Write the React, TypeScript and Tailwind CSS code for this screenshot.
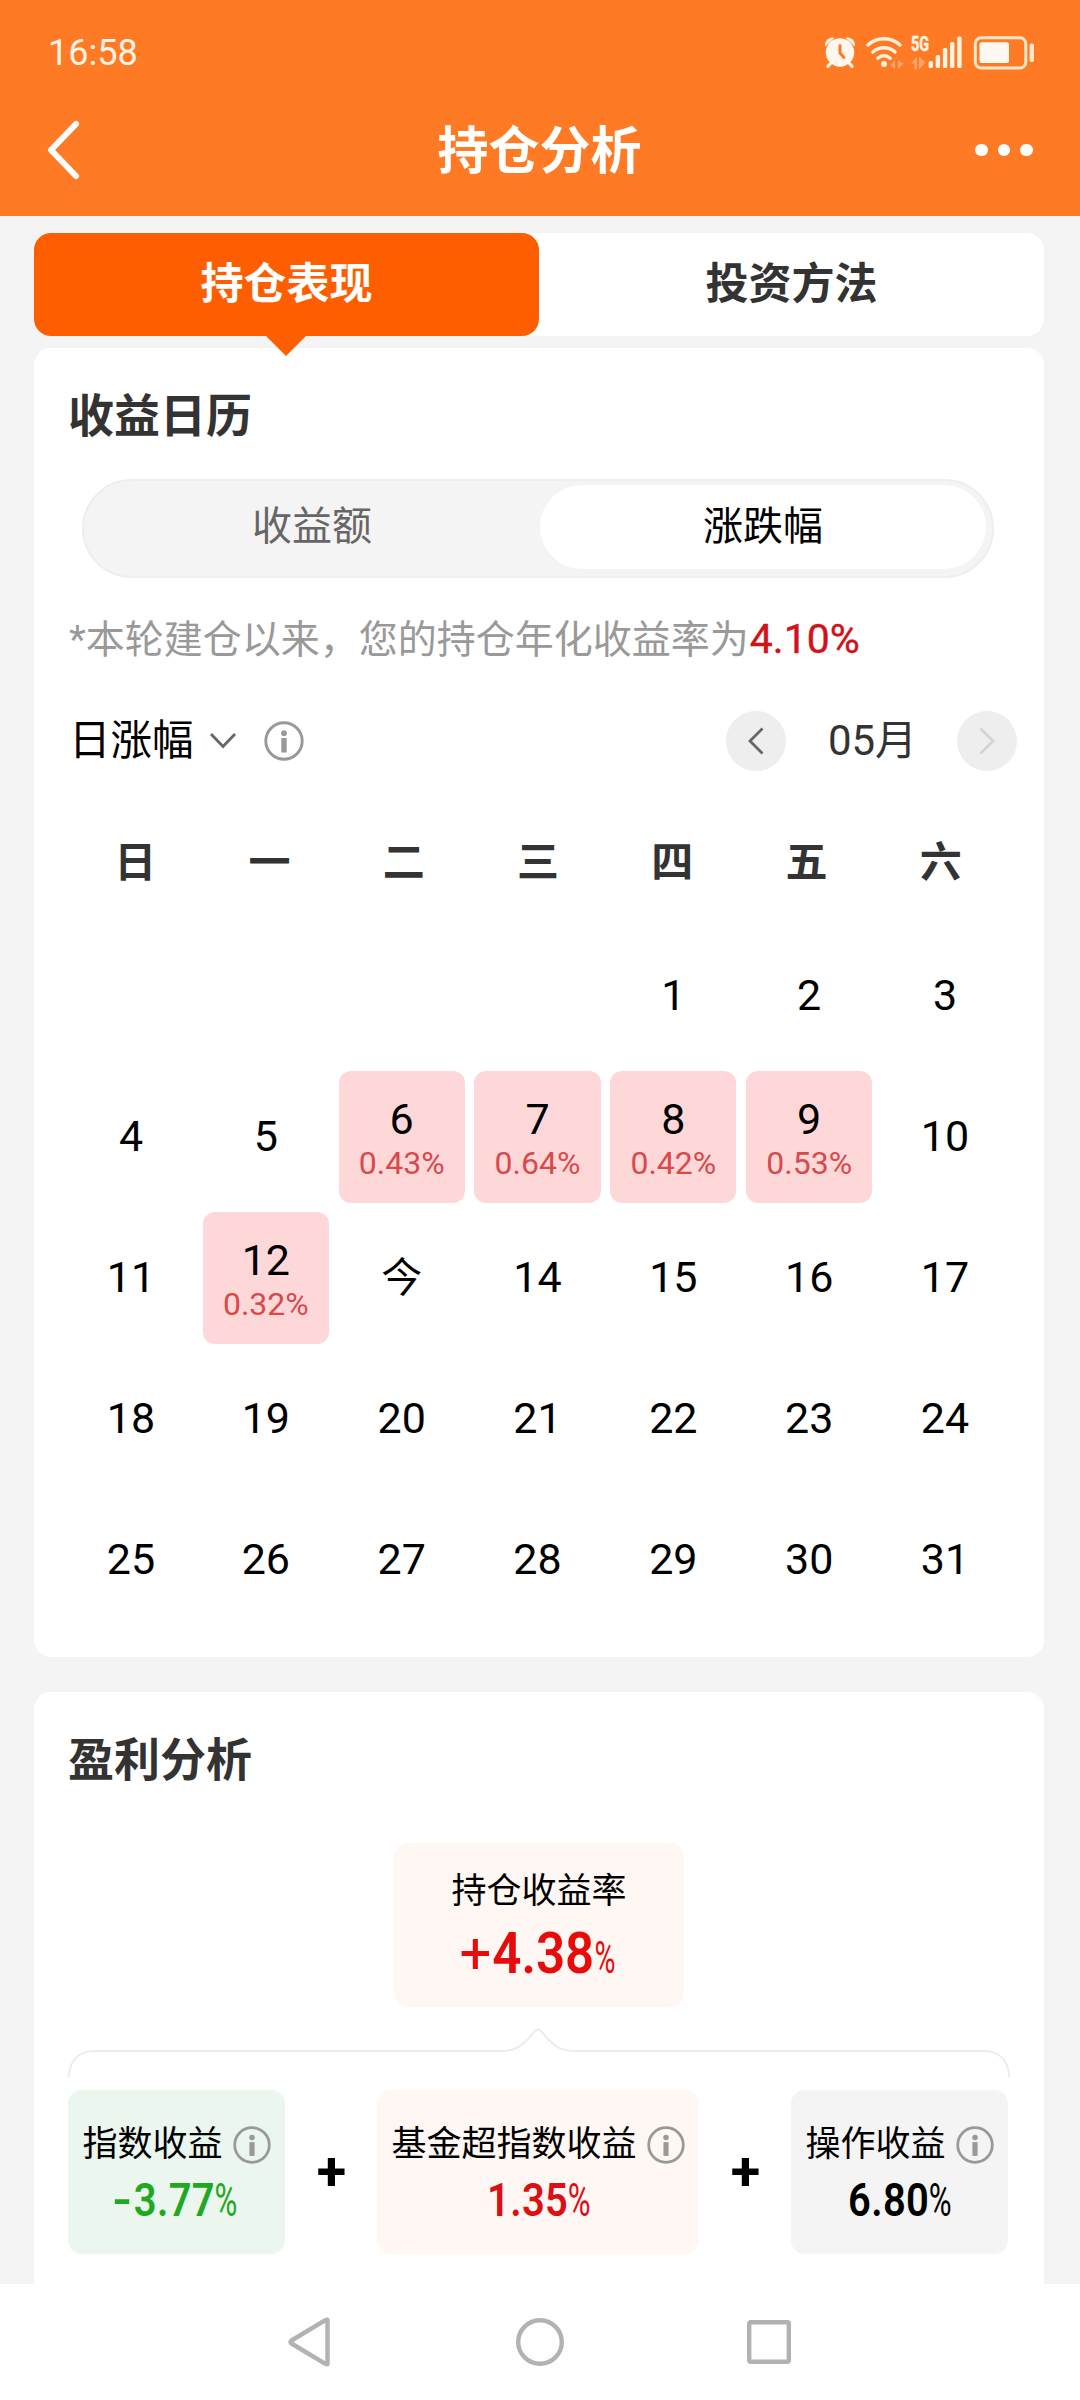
import React, { useState } from 'react';
import clsx from 'clsx';

const weekdays = ['日', '一', '二', '三', '四', '五', '六'];

const dailyRates: Record<number, string> = {
  6: '0.43%',
  7: '0.64%',
  8: '0.42%',
  9: '0.53%',
  12: '0.32%',
};

const FIRST_WEEKDAY = 4;
const TODAY = 13;
const days = Array.from({ length: 31 }, (_, i) => i + 1);

const InfoIcon = ({ className }: { className?: string }) => (
  <svg viewBox="0 0 40 40" className={className} fill="none">
    <circle cx="20" cy="20" r="18.2" stroke="#999" strokeWidth="2.9" />
    <circle cx="20" cy="12.2" r="2.9" fill="#999" />
    <rect x="17.3" y="17" width="5.4" height="14.5" fill="#999" />
  </svg>
);

const StatusBar = () => (
  <div className="flex h-[84px] items-end justify-between pl-12 pr-[45px] text-[#fff3e6]">
    <span className="h-[50px] text-[36px] leading-[38px]">16:58</span>
    <svg viewBox="824 32 211 40" className="mb-[12px] h-10 w-[211px]" fill="none">
      {/* alarm */}
      <g fill="#fff6ee">
        <circle cx="840" cy="52.5" r="14.2" />
        <path d="M825.2 46.5A7.5 7.5 0 0 1 834.5 37.8z" />
        <path d="M854.8 46.5A7.5 7.5 0 0 0 845.5 37.8z" />
      </g>
      <path d="M830.5 63.5l-2.6 2.8M849.5 63.5l2.6 2.8" stroke="#fff6ee" strokeWidth="3.2" strokeLinecap="round" />
      <path d="M840 45.5v7.5l4 4.5" stroke="#ff7a25" strokeWidth="3" strokeLinecap="round" />
      {/* wifi */}
      <g stroke="#fff3e0" strokeWidth="3.4" strokeLinecap="round">
        <path d="M868 45a23.5 23.5 0 0 1 32 0" />
        <path d="M873 52a16.5 16.5 0 0 1 22 0" />
        <path d="M877.8 58.2a9.2 9.2 0 0 1 12.4 0" />
      </g>
      <circle cx="884" cy="64" r="3" fill="#fff3e0" />
      <path d="M890.5 65.5l4.5-5.5v9zM898 60v9l5.5-5.5zM911 63.5l6-7v13h-2.6v-6zM919 56.5v13l6.5-7z" fill="#ffa56b" />
      {/* signal */}
      <text x="911" y="50.8" fill="#fff3e0" stroke="#fff3e0" strokeWidth="0.5" fontSize="19.5" fontWeight="700" textLength="18" lengthAdjust="spacingAndGlyphs">5G</text>
      <g fill="#fff3e0">
        <rect x="928.6" y="61" width="4.4" height="7" rx="1.6" />
        <rect x="935.7" y="55" width="4.4" height="13" rx="1.6" />
        <rect x="942.9" y="48" width="4.4" height="20" rx="1.6" />
        <rect x="950" y="42" width="4.4" height="26" rx="1.6" />
        <rect x="957.2" y="36.5" width="4.4" height="31.5" rx="1.6" />
      </g>
      {/* battery */}
      <rect x="975.3" y="37.8" width="50.5" height="30.2" rx="6" stroke="#ffe7cc" strokeWidth="3" />
      <rect x="979.5" y="42.3" width="29.5" height="20.8" rx="2.5" fill="#fff8f2" />
      <rect x="1029.6" y="43.5" width="4.4" height="18.5" rx="1.8" fill="#ffe7cc" />
    </svg>
  </div>
);

const RateCard = ({ title, value, negative, className, valueClassName }: {
  title: string;
  value: string;
  negative?: boolean;
  className: string;
  valueClassName: string;
}) => (
  <div className={clsx('flex h-[164px] flex-col items-center rounded-[14px] pt-[33px]', className)}>
    <div className="flex h-[44px] items-center text-[35px] leading-[44px] text-black">
      <span>{title}</span>
      <InfoIcon className="ml-[10px] h-[38px] w-[38px]" />
    </div>
    <div className={clsx('mt-[5px] flex scale-x-[0.85] items-baseline text-[47px] leading-[56px]', valueClassName)}>
      {negative && <span className="mr-[2px] inline-block origin-right scale-x-[1.35] font-semibold">-</span>}
      <span className="font-semibold tracking-[0.4px]">{value}</span>
      <span className="inline-block w-[25px]"><span className="-ml-px inline-block origin-left scale-x-[0.78]">%</span></span>
    </div>
  </div>
);

const App = () => {
  const [tab, setTab] = useState('performance');
  const [mode, setMode] = useState('rate');

  return (
    <div className="flex h-[2400px] w-[1080px] flex-col overflow-hidden bg-[#f4f4f4] font-[Roboto,'Noto_Sans_CJK_SC',sans-serif]">
      <header className="h-[216px] shrink-0 bg-[#ff7a25]">
        <StatusBar />
        <div className="flex h-[132px] items-center justify-between pl-[47px] pr-[47px] text-white">
          <svg viewBox="0 0 34 60" className="h-[60px] w-[34px]" fill="none">
            <path d="M29 4L4 30l25 26" stroke="currentColor" strokeWidth="6" strokeLinecap="round" strokeLinejoin="round" />
          </svg>
          <h1 className="ml-[23px] pt-[3px] text-[51px] font-bold leading-[60px]">持仓分析</h1>
          <div className="flex gap-[10px]">
            <i className="h-[12.6px] w-[12.6px] rounded-full bg-white" />
            <i className="h-[12.6px] w-[12.6px] rounded-full bg-white" />
            <i className="h-[12.6px] w-[12.6px] rounded-full bg-white" />
          </div>
        </div>
      </header>

      <main className="h-[2068px] shrink-0 overflow-hidden px-[34px] pr-9 pt-[17px]">
        <div className="relative z-10 flex h-[103px] rounded-[17px] bg-white text-[43px] font-bold text-[#333]">
          <button
            onClick={() => setTab('performance')}
            className={clsx('relative w-1/2 rounded-[17px]', tab === 'performance' && 'bg-[#ff5e00] text-white')}
          >
            持仓表现
            <svg viewBox="0 0 42 21" className="absolute left-1/2 top-full -ml-px -mt-px h-[21px] w-[42px] -translate-x-1/2">
              <path d="M0 0h42L21 21z" fill="#ff5e00" />
            </svg>
          </button>
          <button onClick={() => setTab('method')} className="w-1/2">投资方法</button>
        </div>

        {/* calendar */}
        <section className="mt-3 h-[1309px] rounded-[17px] bg-white pl-[33px] pr-[27px] pt-9">
          <h2 className="pl-px text-[46px] font-bold leading-[64px] text-[#333]">收益日历</h2>

          <div className="ml-[15px] mt-[31px] flex h-[99px] w-[912px] rounded-full border-2 border-[#eee] bg-[#f4f4f4] pl-1 pr-[6px] pt-1 text-[40px]">
            <button onClick={() => setMode('amount')} className="h-[84px] w-[452px] pr-1 text-[#666]">收益额</button>
            <button
              onClick={() => setMode('rate')}
              className={clsx('h-[84px] w-[446px] rounded-full text-black', mode === 'rate' && 'bg-white')}
            >
              涨跌幅
            </button>
          </div>

          <p className="mt-[33px] whitespace-nowrap pl-[2px] text-[39px] leading-[56px] text-[#999]">
            *本轮建仓以来，您的持仓年化收益率为
            <span className="pl-px text-[41px] text-[#d0121b] [-webkit-text-stroke:0.4px_#d0121b]">4.10%</span>
          </p>

          <div className="mt-[43px] flex h-[60px] items-center">
            <span className="w-[128px] whitespace-nowrap pl-[2px] text-[41.5px] leading-[60px] text-black">日涨幅</span>
            <svg viewBox="0 0 28 18" className="ml-[14px] h-[18px] w-7" fill="none">
              <path d="M2 2l12 12.5L26 2" stroke="#666" strokeWidth="2.8" />
            </svg>
            <InfoIcon className="ml-[27px] h-10 w-10" />
            <div className="ml-auto flex w-[291px] items-center justify-between">
              <button className="flex h-[60px] w-[60px] items-center justify-center rounded-full bg-[#eee]">
                <svg viewBox="0 0 16 28" className="h-7 w-4" fill="none">
                  <path d="M14.5 1.5L2 14l12.5 12.5" stroke="#666" strokeWidth="2.8" />
                </svg>
              </button>
              <span className="pl-[2px] text-[42px] leading-[60px] text-[#333]">05月</span>
              <button className="flex h-[60px] w-[60px] items-center justify-center rounded-full bg-[#eee]">
                <svg viewBox="0 0 16 28" className="h-7 w-4" fill="none">
                  <path d="M1.5 1.5L14 14 1.5 26.5" stroke="#d4d4d4" strokeWidth="2.8" />
                </svg>
              </button>
            </div>
          </div>

          <div className="mt-[62px] grid h-[60px] w-[941px] grid-cols-7 pl-px text-center text-[42px] font-bold leading-[60px] text-[#333]">
            {weekdays.map((name) => <div key={name}>{name}</div>)}
          </div>

          <div className="mt-[37px] grid w-[941px] auto-rows-[132px] grid-cols-7 gap-[9px] gap-x-[9.8px] text-center">
            {Array.from({ length: FIRST_WEEKDAY }, (_, i) => <div key={`blank-${i}`} />)}
            {days.map((day) => {
              const rate = dailyRates[day];
              return (
                <div
                  key={day}
                  className={clsx(
                    'flex flex-col items-center rounded-xl text-[43px] leading-[44px] text-black',
                    rate ? 'bg-[#fed7d9] pt-[25.5px]' : 'pt-[42.5px]',
                    (day + FIRST_WEEKDAY) % 7 === 1 && 'pl-[2px]'
                  )}
                >
                  {day === TODAY ? <span className="pt-px text-[41px]">今</span> : day}
                  {rate && <span className="text-[32px] text-[#d84a4a]">{rate}</span>}
                </div>
              );
            })}
          </div>
        </section>

        {/* profit */}
        <section className="mt-[35px] h-[620px] rounded-t-[17px] bg-white px-[34px] pt-9">
          <h2 className="text-[46px] font-bold leading-[64px] text-[#333]">盈利分析</h2>

          <div className="ml-[326px] mt-[51px] flex h-[164px] w-[290px] flex-col items-center rounded-[14px] bg-[#fff7f4] pt-[27px]">
            <span className="text-[35px] leading-[44px] text-black">持仓收益率</span>
            <div className="mt-[5px] flex scale-x-[0.88] items-baseline text-[58px] leading-[68px] text-[#e60c0c]">
              <span className="mr-px inline-block origin-right scale-x-[1.1]">+</span>
              <span className="font-semibold">4.38</span>
              <span className="inline-block w-[24px] text-[44px]"><span className="inline-block origin-left scale-x-[0.74]">%</span></span>
            </div>
          </div>

          <svg viewBox="0 0 944 52" className="mt-[20px] h-[52px] w-[944px]" fill="none">
            <path
              d="M1 50C1 35 10 24 26 24H434C447 24 453 19 460 12L467 4Q470 1 473 4L480 12C487 19 493 24 506 24H917C932 24 941 35 941 50"
              stroke="#f1eae7"
              strokeWidth="2"
            />
          </svg>

          <div className="mt-[11px] flex w-[940px] items-center justify-between">
            <RateCard title="指数收益" value="3.77" negative className="w-[217px] bg-[#ebf6ee]" valueClassName="text-[#22a722]" />
            <span className="pl-px text-[54px] font-bold leading-[60px] text-black">+</span>
            <RateCard title="基金超指数收益" value="1.35" className="w-[322px] bg-[#fff7f4]" valueClassName="text-[#dc0f14]" />
            <span className="pl-px text-[54px] font-bold leading-[60px] text-black">+</span>
            <RateCard title="操作收益" value="6.80" className="w-[217px] bg-[#f4f4f4]" valueClassName="text-black" />
          </div>
        </section>
      </main>

      {/* system navigation */}
      <nav className="flex h-[116px] shrink-0 items-center bg-[#fefefe] pl-[287px]">
        <svg viewBox="0 0 505 50" className="h-[50px] w-[505px]" fill="none" stroke="#b2b2b2" strokeWidth="4.4" strokeLinejoin="round">
          <path d="M40.5 3.5v43Q40.5 48 38 46.6L4.5 26.5Q2.5 25 4.5 23.5L38 3.4Q40.5 2 40.5 3.5z" />
          <circle cx="253" cy="25" r="21.8" />
          <rect x="462.2" y="5.2" width="39.6" height="39.6" rx="1.5" />
        </svg>
      </nav>
    </div>
  );
};

export default App;
